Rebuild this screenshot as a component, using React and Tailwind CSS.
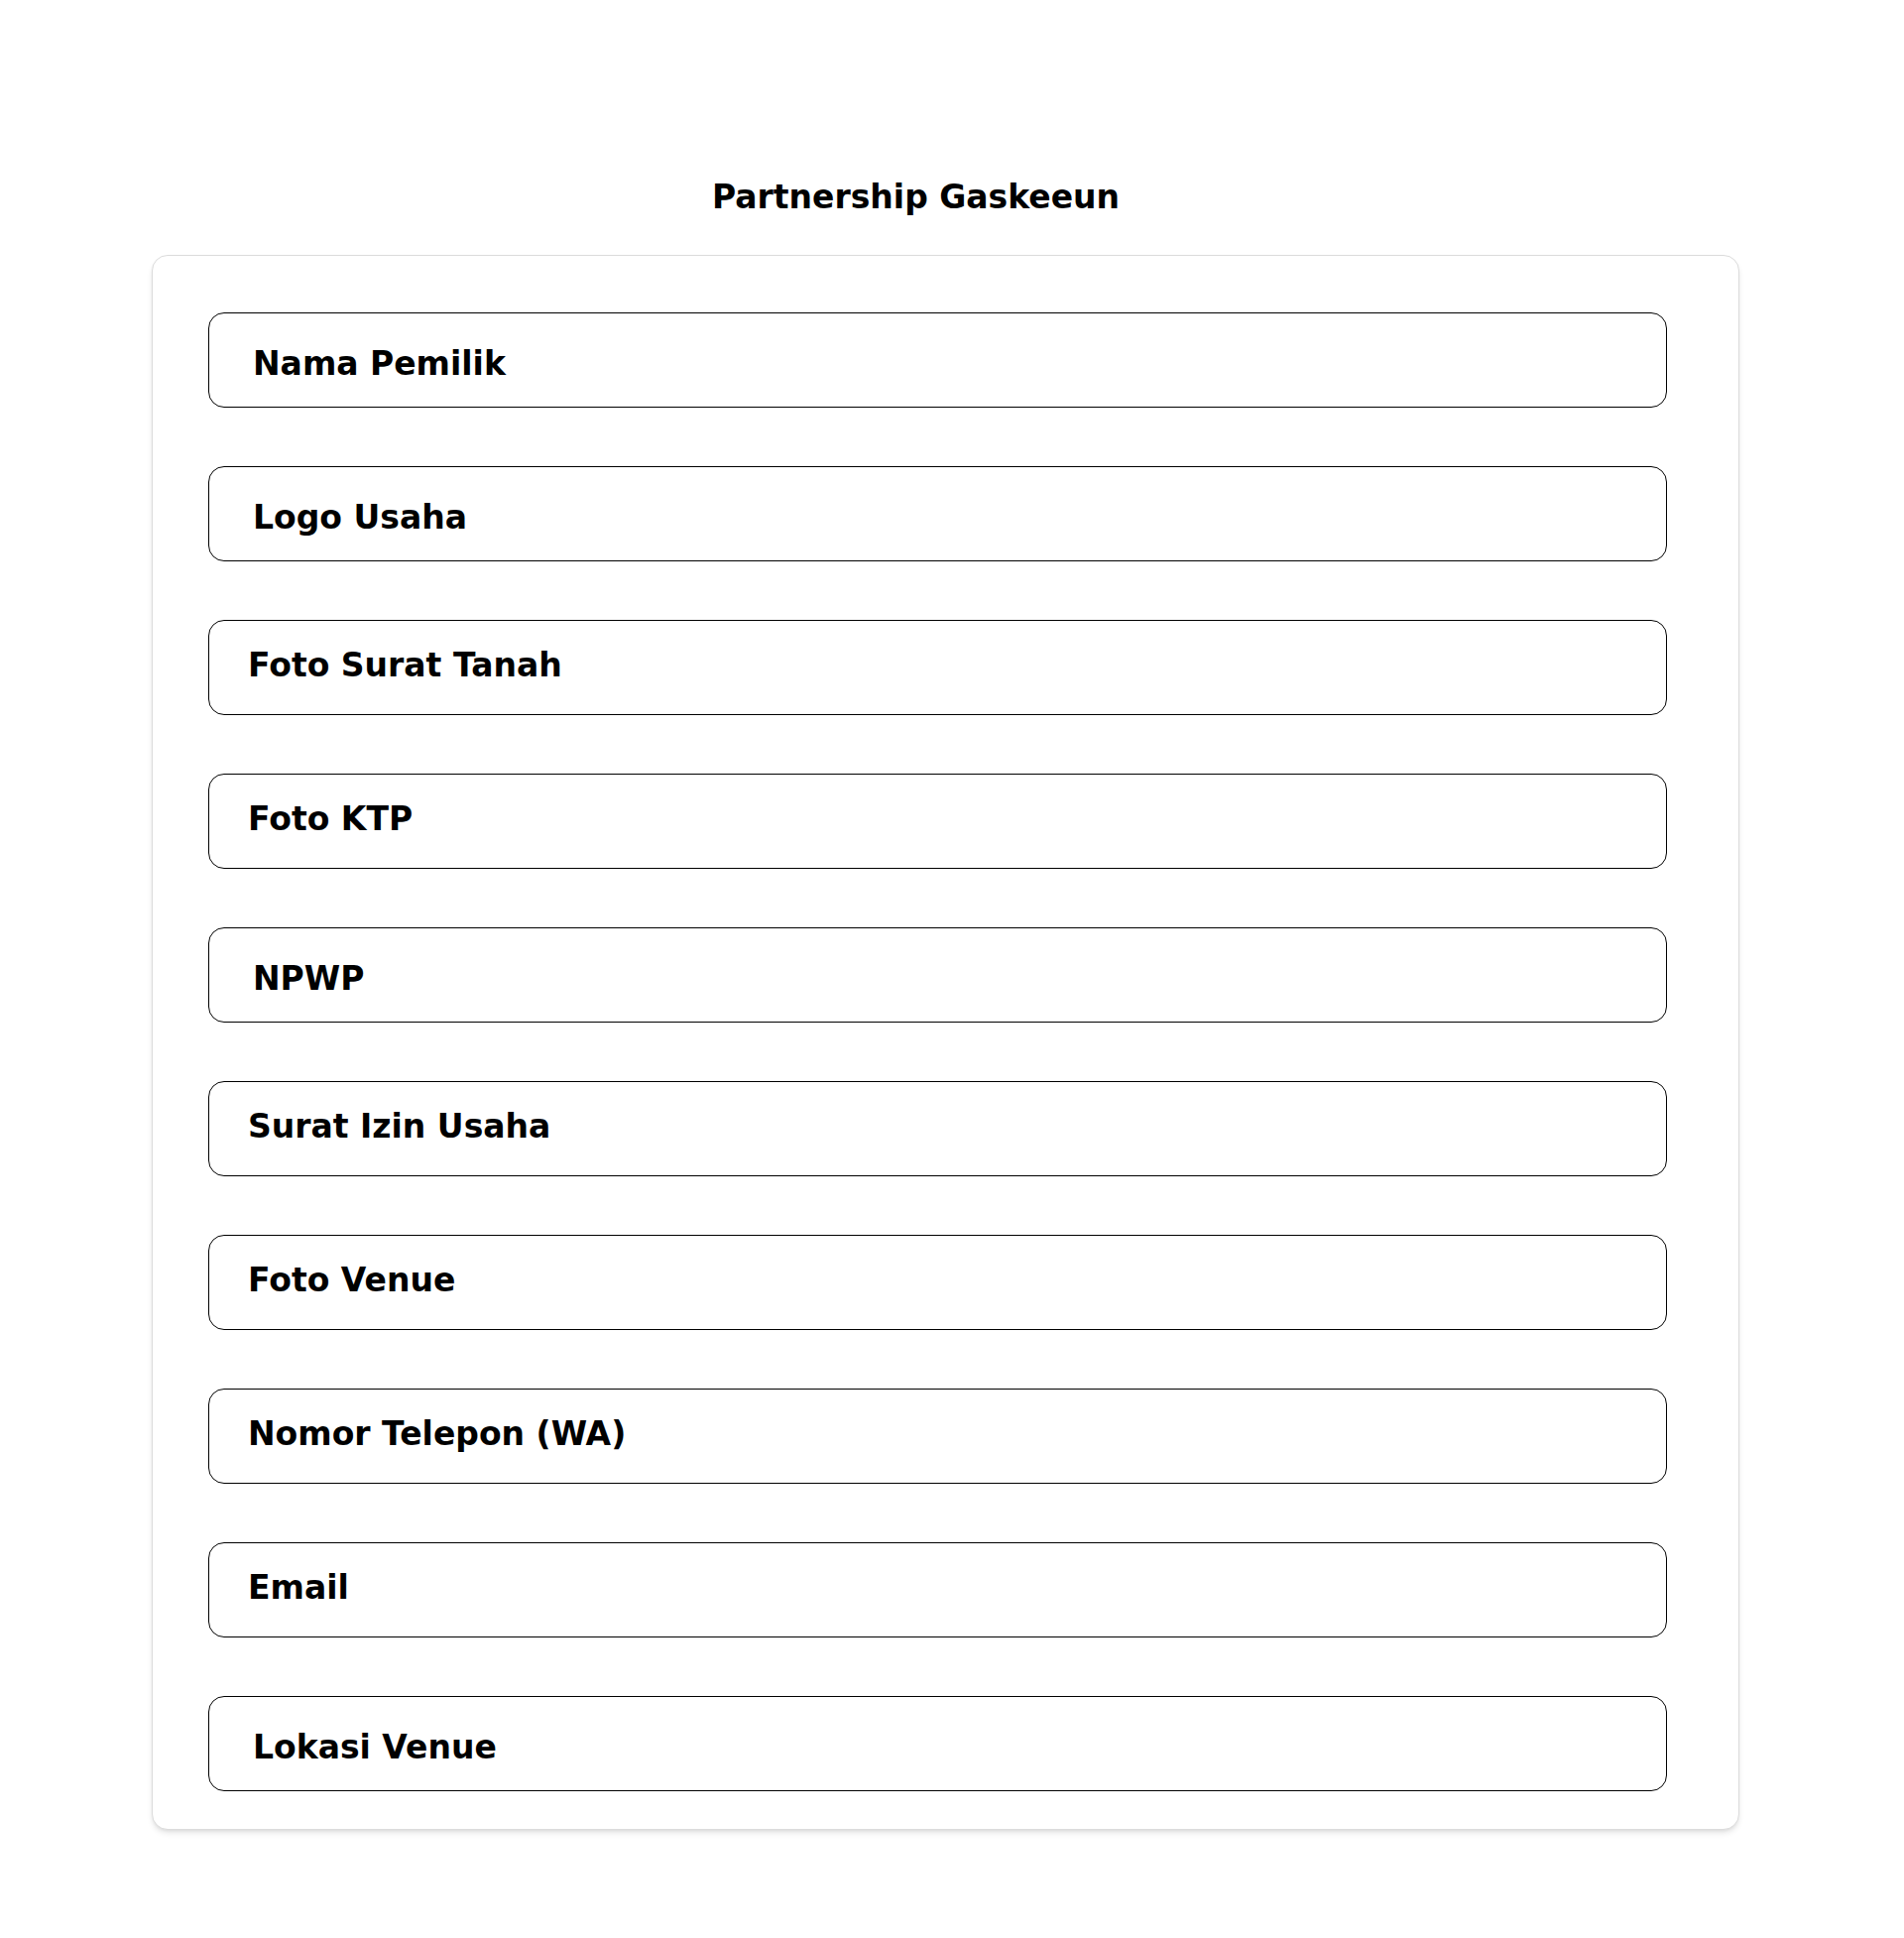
import React from 'react';

const fields = [
  { label: 'Nama Pemilik', inset: true },
  { label: 'Logo Usaha', inset: true },
  { label: 'Foto Surat Tanah', inset: false },
  { label: 'Foto KTP', inset: false },
  { label: 'NPWP', inset: true },
  { label: 'Surat Izin Usaha', inset: false },
  { label: 'Foto Venue', inset: false },
  { label: 'Nomor Telepon (WA)', inset: false },
  { label: 'Email', inset: false },
  { label: 'Lokasi Venue', inset: true },
];

function App() {
  return (
    <div className="min-h-[1954px] w-full bg-white font-['DejaVu_Sans',sans-serif] text-black">
      <div className="ml-[153px] w-[1601px] pt-[179px]">
        {/* Title */}
        <h1 className="pr-[60px] text-center text-[33px] font-bold leading-[40px]">
          Partnership Gaskeeun
        </h1>

        {/* Form card */}
        <div className="mt-[38px] flex flex-col gap-[59px] rounded-2xl border border-[#dcdcdc] bg-white pt-[57px] pb-[38px] pl-[56px] pr-[72px] shadow-md">
          {fields.map((f) => (
            <div
              key={f.label}
              className={
                f.inset
                  ? 'h-[96px] rounded-2xl border border-black pt-[31px] pl-[44px]'
                  : 'h-[96px] rounded-2xl border border-black pt-[25px] pl-[39px]'
              }
            >
              <span className="block text-[33px] font-bold leading-[40px]">{f.label}</span>
            </div>
          ))}
        </div>
      </div>
    </div>
  );
}

export default App;
